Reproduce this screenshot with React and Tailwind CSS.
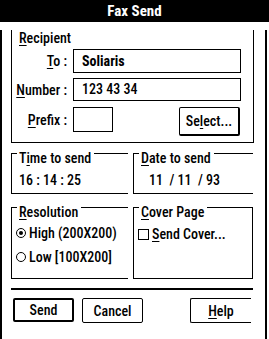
import React from 'react'

const font = "font-['Roboto_Condensed','Roboto',sans-serif] font-stretch-condensed"

function U({ children }) {
  return <span className="underline decoration-1 underline-offset-2">{children}</span>
}

function Legend({ children }) {
  return (
    <div className="-mt-[4px] ml-[5px] w-fit bg-white pl-[2px] pr-[3px] leading-[16px]">{children}</div>
  )
}

function Field({ label, children }) {
  return (
    <div className="flex items-center">
      <div className="w-[55px] whitespace-nowrap text-right leading-[16px]">{label}</div>
      {children}
    </div>
  )
}

function Radio({ checked }) {
  return (
    <span className="flex h-[10px] w-[10px] shrink-0 items-center justify-center rounded-full border border-black">
      {checked && <span className="h-[4px] w-[4px] rounded-full bg-black" />}
    </span>
  )
}

export default function App() {
  return (
    <div className={`h-[339px] w-[269px] overflow-hidden bg-white text-[14px] font-medium text-black ${font}`}>
      <div className="h-[22px] bg-black text-center text-[15px] font-bold leading-[22px] text-white">Fax Send</div>

      <div className="h-[313px] w-[267px] border-x-2 border-b-2 border-black">
        {/* Recipient */}
        <div className="ml-[9px] mt-[13px] w-[243px] border-x border-b border-black pb-[6px]">
          <div className="-mt-[5px] ml-[7px] leading-[16px]">
            <U>R</U>ecipient
          </div>
          <div className="mt-[3px]">
            <Field label={<><U>T</U>o :</>}>
              <div className="ml-[6px] flex h-[24px] w-[168px] items-center border border-black pl-[8px] font-bold">
                Soliaris
              </div>
            </Field>
          </div>
          <div className="mt-[5px]">
            <Field label={<><U>N</U>umber :</>}>
              <div className="ml-[6px] flex h-[23px] w-[168px] items-center border border-black pl-[8px]">
                123 43 34
              </div>
            </Field>
          </div>
          <div className="mt-[6px] flex items-start">
            <div className="flex h-[25px] items-center">
              <Field label={<><U>P</U>refix :</>}>
                <div className="ml-[6px] h-[25px] w-[40px] border border-black" />
              </Field>
            </div>
            <button className="ml-[66px] flex h-[29px] w-[61px] items-center justify-center rounded-[2px] border-b-2 border-l border-r-2 border-t border-black leading-[16px]">
              Se<U>l</U>ect...
            </button>
          </div>
        </div>

        {/* Time / Date */}
        <div className="ml-[9px] mt-[10px] flex gap-[5px]">
          <div className="h-[41px] w-[117px] border-b border-l border-t border-black">
            <Legend>
              T<U>i</U>me to send
            </Legend>
            <div className="ml-[7px] mt-[6px] whitespace-pre leading-[16px]">16 : 14 : 25</div>
          </div>
          <div className="h-[41px] w-[120px] border-b border-l border-t border-black">
            <Legend>
              <U>D</U>ate to send
            </Legend>
            <div className="ml-[15px] mt-[6px] whitespace-pre leading-[16px]">11  / 11  / 93</div>
          </div>
        </div>

        {/* Resolution / Cover */}
        <div className="ml-[9px] mt-[13px] flex gap-[5px]">
          <div className="h-[72px] w-[117px] border-b border-l border-t border-black">
            <Legend>
              <U>R</U>esolution
            </Legend>
            <div className="ml-[4px] mt-[5px] flex h-[16px] items-center whitespace-nowrap">
              <Radio checked />
              <span className="ml-[3px] leading-[16px]">High (200X200)</span>
            </div>
            <div className="ml-[4px] mt-[8px] flex h-[16px] items-center whitespace-nowrap">
              <Radio />
              <span className="ml-[3px] leading-[16px]">Low [100X200]</span>
            </div>
          </div>
          <div className="h-[72px] w-[120px] border border-black">
            <Legend>
              <U>C</U>over Page
            </Legend>
            <div className="ml-[4px] mt-[6px] flex h-[16px] items-center whitespace-nowrap">
              <span className="h-[11px] w-[11px] shrink-0 border border-black" />
              <span className="ml-[3px] leading-[16px]">
                <U>S</U>end Cover...
              </span>
            </div>
          </div>
        </div>

        <div className="ml-[9px] mt-[9px] h-[2px] w-[242px] bg-black" />

        {/* Buttons */}
        <div className="ml-[11px] mt-[8px] flex items-start">
          <button className="flex h-[24px] w-[61px] items-center justify-center rounded-[2px] border-2 border-black leading-[16px]">
            Send
          </button>
          <button className="ml-[8px] flex h-[25px] w-[61px] items-center justify-center rounded-[2px] border border-black leading-[16px]">
            Cancel
          </button>
          <button className="ml-[47px] flex h-[25px] w-[61px] items-center justify-center rounded-l-[2px] border-b border-l border-t border-black leading-[16px]">
            <U>H</U>elp
          </button>
        </div>
      </div>
    </div>
  )
}
